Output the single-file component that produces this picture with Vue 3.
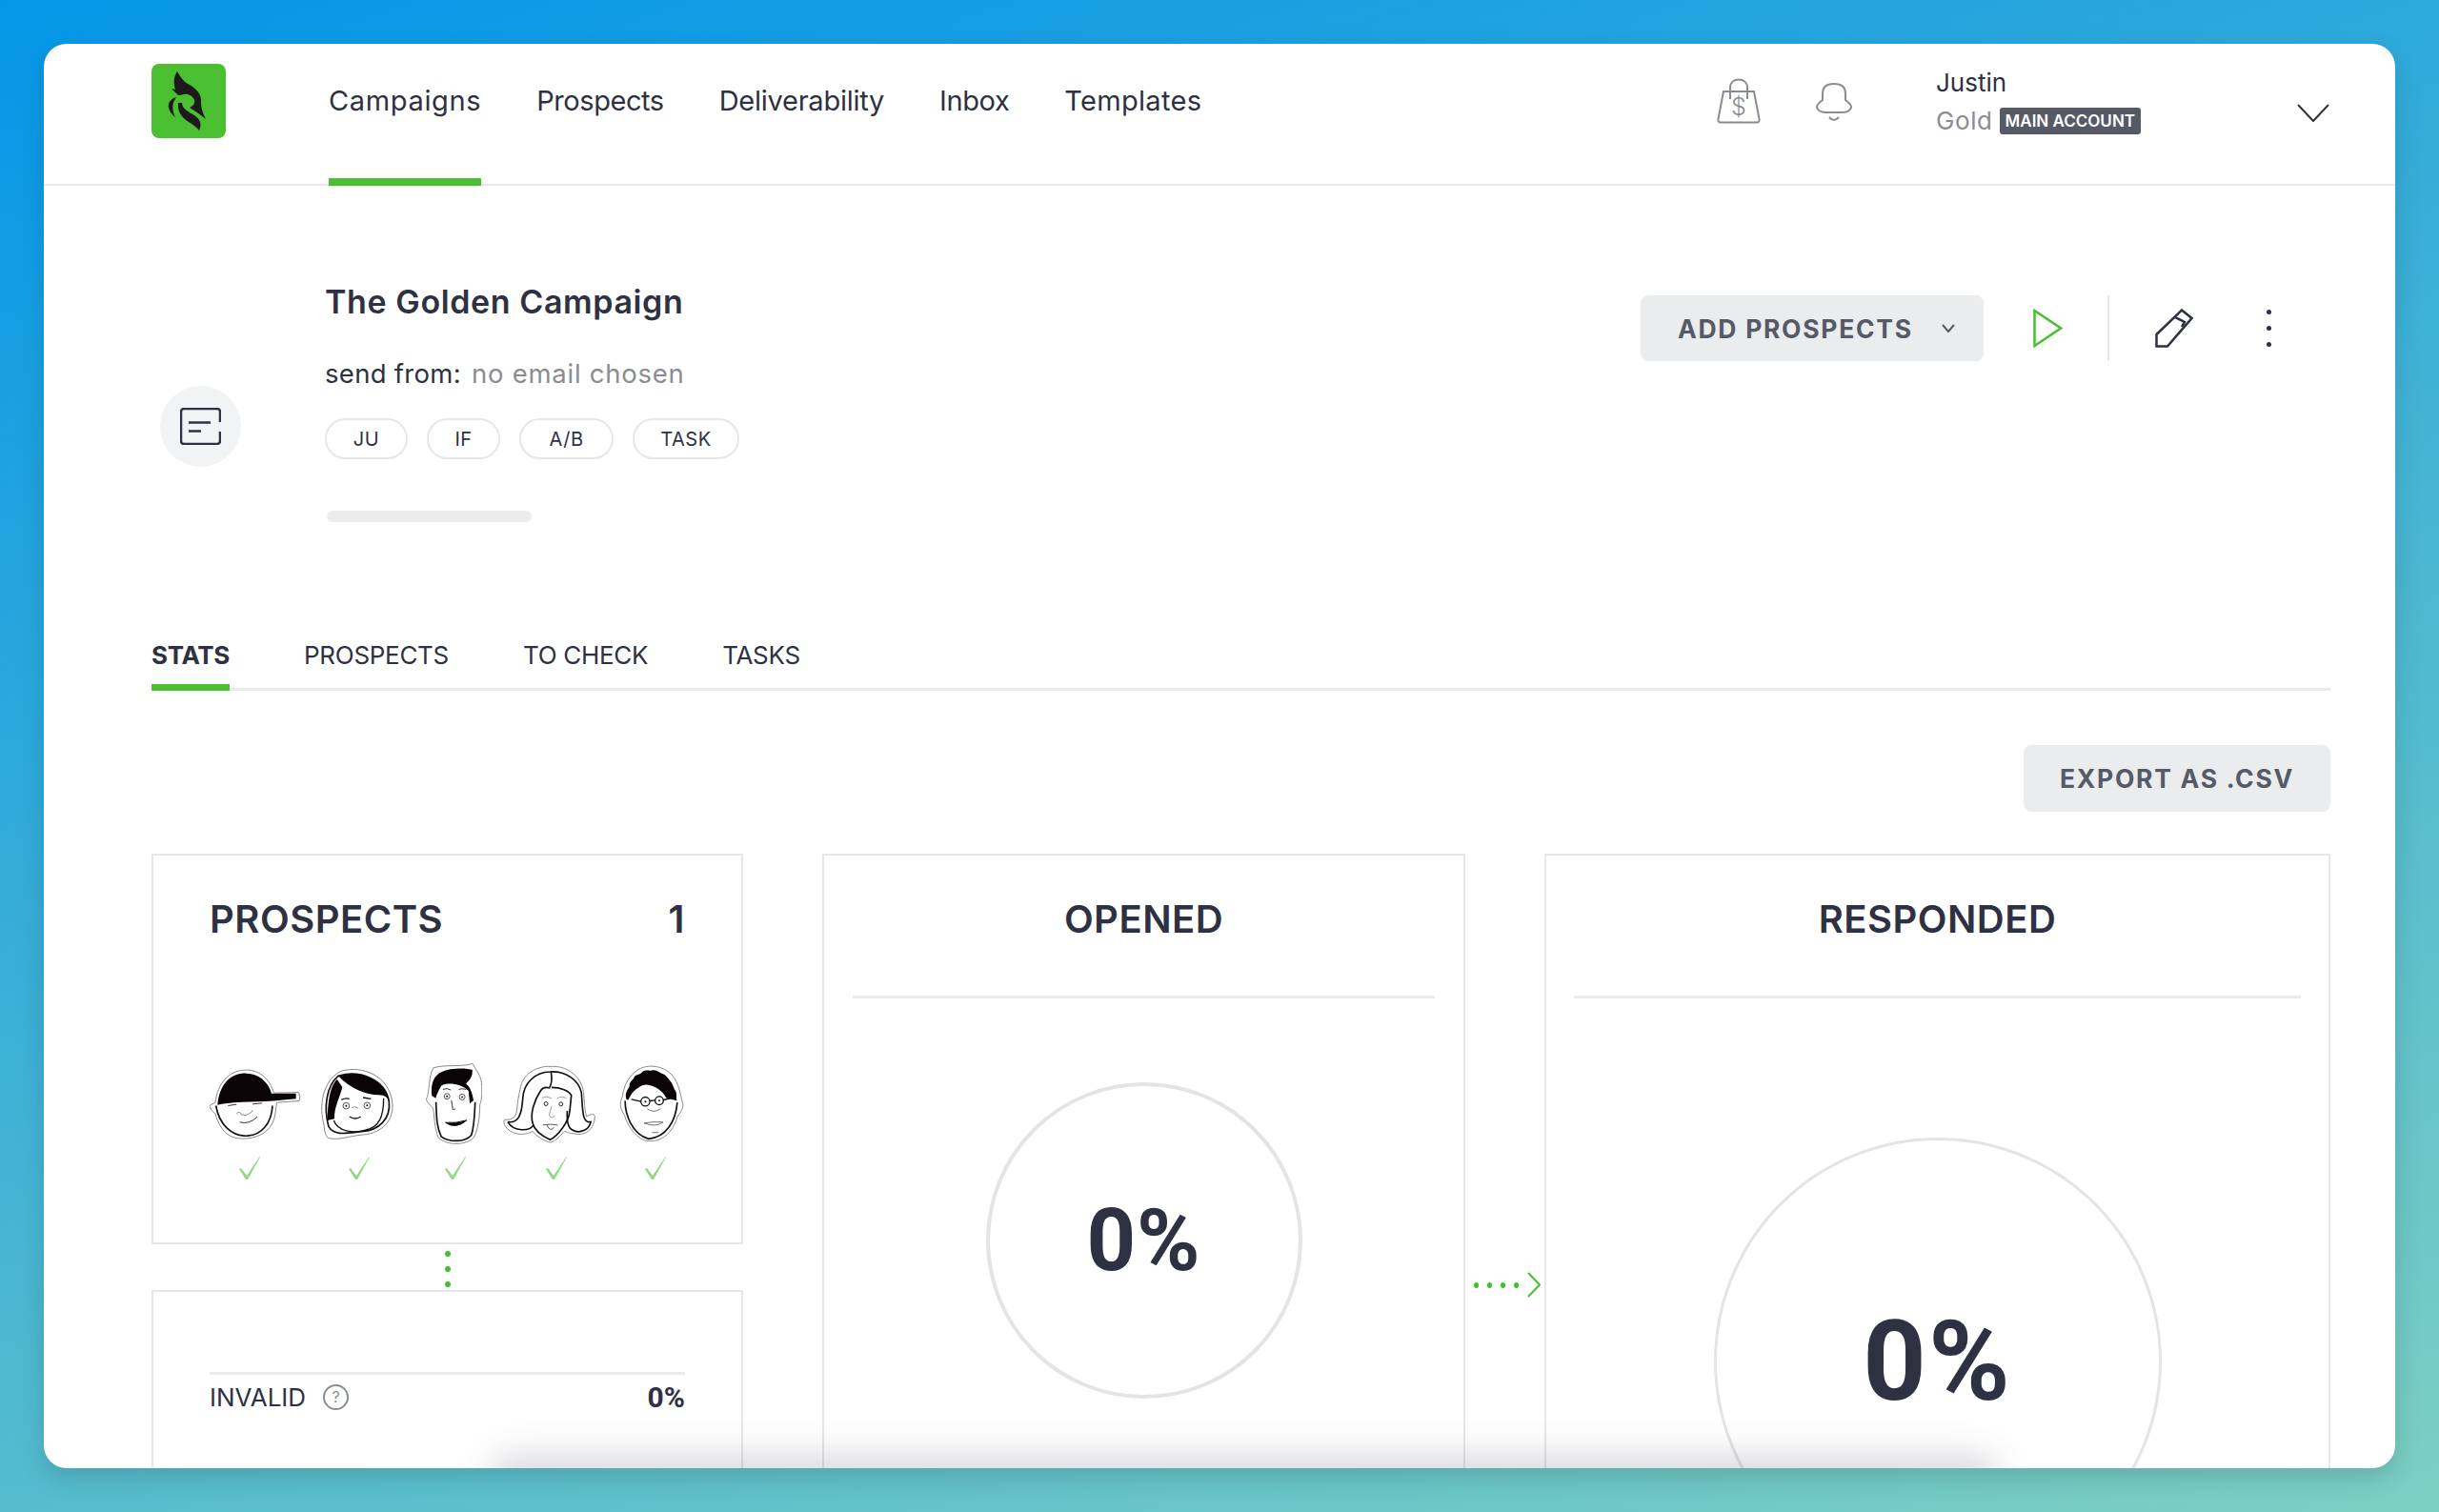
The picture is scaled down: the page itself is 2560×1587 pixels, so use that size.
<script setup>
const navItems = [
  { label: 'Campaigns', spacing: 0.65 },
  { label: 'Prospects', spacing: -0.45 },
  { label: 'Deliverability', spacing: -0.25 },
  { label: 'Inbox', spacing: -0.4 },
  { label: 'Templates', spacing: 0.3 }
]
const pills = [
  { label: 'JU', width: 87 },
  { label: 'IF', width: 77 },
  { label: 'A/B', width: 99 },
  { label: 'TASK', width: 112 }
]
const tabs = ['STATS', 'PROSPECTS', 'TO CHECK', 'TASKS']

// gap = space to the next face, checkOffset = nudge of the tick under it
const faces = [
  { id: 'cap', width: 96, gap: 21, checkOffset: -12 },
  { id: 'bob', width: 76, gap: 34, checkOffset: 4 },
  { id: 'quiff', width: 59, gap: 22, checkOffset: 3 },
  { id: 'long', width: 97, gap: 25, checkOffset: 14 },
  { id: 'glasses', width: 68, gap: 0, checkOffset: 8 }
]
</script>

<template>
  <div class="page">
    <div class="panel">
      <header class="topbar">
        <div class="logo">
          <svg viewBox="0 0 78 78" width="78" height="78">
            <rect width="78" height="78" rx="8" fill="#4abf31" />
            <path fill="#1d1a1c" d="M27 8C30 13 33 18 38 21C46 25 52 31 52 38C52 44 52 48 57 58C51 53 45 49 40 46C44 44 46 41 45 38C43 33 38 31 34 32C31 33 29 33 28 33L21 26L25 27C23 20 23 14 27 8Z" />
            <path fill="#1d1a1c" d="M28 41C27 49 31 56 39 61C44 64 48 67 50 70C52 66 52 62 50 59C47 54 41 52 37 49C34 47 32 44 32 41Z" />
            <path fill="#1d1a1c" d="M26 35C20 37 17 41 18 46C19 50 22 54 25 56C22 50 22 44 23 41C24 38 25 37 26 35Z" />
          </svg>
        </div>
        <nav class="nav">
          <a
            v-for="(item, i) in navItems"
            :key="item.label"
            class="nav-link"
            :class="{ active: i === 0 }"
            :style="{ letterSpacing: item.spacing + 'px' }"
          >{{ item.label }}</a>
        </nav>
        <div class="top-right">
          <svg class="bag" viewBox="0 0 46 48" width="46" height="48" fill="none" stroke="#8a8c93" stroke-width="2">
            <path d="M7 14L1.500 43Q1 46.500 4 46.500H42Q45 46.500 44.500 43L39 14Z" />
            <path d="M14 22V10C14 4.500 18 1.500 23 1.500C28 1.500 32 4.500 32 10V22" />
            <text x="23" y="39" text-anchor="middle" class="bag-sign">$</text>
          </svg>
          <svg class="bell" viewBox="0 0 38 42" width="38" height="42" fill="none" stroke="#8a8c93" stroke-width="2">
            <path d="M7 18V11C7 4 12 1 19 1C26 1 31 4 31 11V18C35 21 37 23 37 25C37 29 32 31 26 31H12C6 31 1 29 1 25C1 23 3 21 7 18Z" />
            <path d="M14 36Q19 42 24 36" />
          </svg>
          <div class="account">
            <div class="account-name">Justin</div>
            <div class="account-plan">
              <span class="plan-name">Gold</span>
              <span class="badge">MAIN ACCOUNT</span>
            </div>
          </div>
          <svg class="account-caret" viewBox="0 0 34 19" width="34" height="19" fill="none" stroke="#2e3142" stroke-width="2">
            <path d="M1 1L17 18L33 1" />
          </svg>
        </div>
      </header>

      <main class="content">
        <section class="hero">
          <div class="hero-icon">
            <svg viewBox="0 0 43 39" width="43" height="39" fill="none" stroke="#2e3142" stroke-width="2.500">
              <path d="M42 15V4A3 3 0 0 0 39 1H4A3 3 0 0 0 1 4V35A3 3 0 0 0 4 38H39A3 3 0 0 0 42 35V25" />
              <path d="M9 15.500H32M9 24.500H22" />
            </svg>
          </div>
          <div class="hero-info">
            <h1 class="hero-title">The Golden Campaign</h1>
            <div class="hero-from">send from: <span class="muted">no email chosen</span></div>
            <div class="pills">
              <span
                v-for="pill in pills"
                :key="pill.label"
                class="pill"
                :style="{ width: pill.width + 'px' }"
              >{{ pill.label }}</span>
            </div>
            <div class="hero-progress"></div>
          </div>
          <div class="hero-actions">
            <button class="btn btn-add">
              <span>ADD PROSPECTS</span>
              <svg viewBox="0 0 14 9" width="14" height="9" fill="none" stroke="#565a66" stroke-width="2">
                <path d="M1 1L7 8L13 1" />
              </svg>
            </button>
            <svg class="play" viewBox="0 0 31 41" width="31" height="41" fill="none" stroke="#4abf31" stroke-width="2.500">
              <path d="M1.500 2V39L29 20.500Z" />
            </svg>
            <div class="action-divider"></div>
            <svg class="pencil" viewBox="0 0 40 41" width="40" height="41" fill="none" stroke="#2e3142" stroke-width="2.500">
              <path d="M1.500 27L28 1.500L38.500 10L13 39.500H1.500Z" />
              <path d="M21 9L31 14L28 19" />
            </svg>
            <div class="kebab"><i></i><i></i><i></i></div>
          </div>
        </section>

        <div class="tabs">
          <a v-for="(tab, i) in tabs" :key="tab" class="tab" :class="{ active: i === 0 }">{{ tab }}</a>
        </div>

        <div class="export-row">
          <button class="btn btn-export">EXPORT AS .CSV</button>
        </div>

        <section class="stats">
          <div class="col-left">
            <div class="card card-prospects">
              <div class="card-head">
                <span class="card-title">PROSPECTS</span>
                <span class="card-title">1</span>
              </div>
              <div class="faces">
                <div
                  v-for="face in faces"
                  :key="face.id"
                  class="face"
                  :style="{ width: face.width + 'px', marginRight: face.gap + 'px' }"
                >
                  <div class="face-art">
                    <svg v-if="face.id === 'cap'" viewBox="60 65 288 224" width="96" height="75" fill="none">
                      <path stroke="#888" stroke-width="3" d="M78 170C85 110 120 70 170 68C215 65 250 95 262 140L340 138Q348 150 342 165L272 170C268 180 270 200 262 225C245 275 185 292 135 280C105 270 85 235 78 205C65 195 58 185 62 178Z" />
                      <path stroke="#111" stroke-width="5" d="M80 180C90 240 130 278 180 275C225 272 255 235 258 180" />
                      <path fill="#0a0406" d="M85 178C90 115 125 78 170 78C215 78 245 105 255 142L332 142L332 158L260 165C200 170 130 165 85 178Z" />
                      <path stroke="#333" stroke-width="3" d="M155 232Q185 240 210 215M118 180L145 176M195 175L225 172" />
                      <path stroke="#777" stroke-width="2.500" d="M145 205Q155 195 160 208Q175 215 185 205Q195 200 195 195" />
                    </svg>
                    <svg v-else-if="face.id === 'bob'" viewBox="408 65 228 228" width="76" height="76" fill="none">
                      <path stroke="#888" stroke-width="3" d="M470 75C540 55 620 90 632 170C640 230 600 270 540 275C500 278 460 295 430 285C418 275 420 255 415 235C400 170 420 100 470 75Z" />
                      <path stroke="#111" stroke-width="5" d="M462 90C530 70 610 100 622 170C628 225 590 262 535 265C490 270 450 280 432 250C415 190 425 120 462 90Z" />
                      <path fill="#0a0406" d="M462 90C500 130 550 150 590 150C610 150 618 160 622 170C610 100 530 70 462 90Z" />
                      <path fill="#0a0406" d="M458 100C440 120 430 150 428 230L450 225C448 190 470 150 475 125Z" />
                      <path stroke="#111" stroke-width="4" d="M498 218Q515 230 533 218M448 230C460 265 510 272 550 260C590 250 605 220 605 160M472 165Q485 158 497 162M540 158L565 162" />
                      <circle cx="487" cy="184" r="10" stroke="#333" stroke-width="2.500" />
                      <circle cx="553" cy="183" r="10" stroke="#333" stroke-width="2.500" />
                      <circle cx="487" cy="184" r="3" fill="#111" />
                      <circle cx="553" cy="183" r="3" fill="#111" />
                      <path stroke="#777" stroke-width="2.500" d="M505 190Q515 182 525 192" />
                    </svg>
                    <svg v-else-if="face.id === 'quiff'" viewBox="741 48 178 258" width="59" height="86" fill="none">
                      <path stroke="#888" stroke-width="3" d="M764 62C800 50 860 60 889 48C900 70 917 90 917 110C920 140 918 165 912 178C912 220 905 260 893 282C875 305 810 312 780 282C768 250 768 215 764 190C750 175 738 165 745 155C752 135 750 90 764 62Z" />
                      <path stroke="#111" stroke-width="5" d="M773 170C775 220 775 250 790 280C815 298 865 298 885 275C895 245 895 210 897 170" />
                      <path fill="#0a0406" d="M760 150C755 110 768 85 790 75C820 60 870 62 888 68C890 90 880 100 868 112C880 120 888 140 892 165L880 175L876 135C850 110 810 108 790 118C780 135 775 148 772 158Z" />
                      <circle cx="808" cy="152" r="9" stroke="#333" stroke-width="2.500" />
                      <circle cx="856" cy="154" r="9" stroke="#333" stroke-width="2.500" />
                      <circle cx="808" cy="152" r="3" fill="#111" />
                      <circle cx="856" cy="154" r="3" fill="#111" />
                      <path stroke="#333" stroke-width="3" d="M795 130Q808 124 820 132M845 130Q855 126 868 130M822 165L826 190Q822 197 835 192" />
                      <path fill="#0a0406" stroke="#111" stroke-width="3" d="M803 235Q835 258 870 228Q835 238 803 235Z" />
                    </svg>
                    <svg v-else-if="face.id === 'long'" viewBox="85 55 295 247" width="97" height="82" fill="none">
                      <path stroke="#888" stroke-width="3" d="M140 130C145 85 190 55 238 58C290 55 335 90 342 140C345 170 345 200 352 218Q372 205 378 215C378 260 345 282 310 272C290 270 285 265 280 265C265 285 245 300 235 300C220 298 190 280 180 265C150 280 110 278 90 245Q85 230 90 228Q130 232 130 190C132 165 135 150 140 130Z" />
                      <path stroke="#111" stroke-width="5" d="M100 235C135 240 145 210 148 160C150 110 190 75 235 75C285 72 325 100 335 140C340 190 335 240 365 235C360 260 330 275 305 260C295 255 288 235 290 200" />
                      <path stroke="#111" stroke-width="5" d="M238 75C242 95 240 115 232 128M240 125C270 125 295 135 303 150L298 200C295 235 260 280 235 292C210 280 185 260 180 240C170 210 185 165 205 135C215 120 232 125 232 128M100 235C120 268 170 265 182 245" />
                      <circle cx="222" cy="177" r="6" stroke="#222" stroke-width="3" />
                      <circle cx="270" cy="178" r="6" stroke="#222" stroke-width="3" />
                      <path stroke="#888" stroke-width="2.500" d="M210 158Q225 150 240 160M258 160Q272 150 288 160M240 185L232 215Q242 225 250 215" />
                      <path stroke="#333" stroke-width="2.500" d="M212 245Q235 240 260 245M225 245Q235 268 248 252" />
                    </svg>
                    <svg v-else viewBox="452 52 204 247" width="68" height="82" fill="none">
                      <path stroke="#888" stroke-width="3" d="M500 75C530 45 590 50 620 85C640 110 645 145 650 165C660 190 640 205 635 215C620 270 580 295 545 292C510 290 480 250 468 210C455 190 450 175 462 150C465 120 480 90 500 75Z" />
                      <path fill="#0a0406" d="M474 160C468 140 478 130 484 118C482 106 494 100 498 92C502 80 518 84 524 74C536 64 548 72 558 68C570 66 578 76 590 80C600 84 606 94 614 104C622 112 622 124 628 132C636 142 630 154 634 164L600 156C590 134 566 118 540 114C524 112 512 124 500 132C490 140 486 152 480 162Z" />
                      <path stroke="#111" stroke-width="5" d="M470 165C470 205 490 270 545 285C600 280 630 230 635 170" />
                      <circle cx="534" cy="167" r="14" stroke="#111" stroke-width="4" />
                      <circle cx="578" cy="164" r="13" stroke="#111" stroke-width="4" />
                      <circle cx="534" cy="167" r="3" fill="#111" />
                      <circle cx="578" cy="164" r="3" fill="#111" />
                      <path stroke="#111" stroke-width="4" d="M520 167L490 160M590 162L625 155M548 165L565 163" />
                      <path stroke="#555" stroke-width="2.500" d="M540 190Q560 205 582 190M530 235Q560 230 590 232Q565 250 530 235M555 265L575 265" />
                    </svg>
                  </div>
                  <svg class="check" :style="{ marginLeft: face.checkOffset + 'px' }" viewBox="0 0 22 24" width="22" height="24">
                    <path fill="#93d884" d="M0 13L2 12L8 20L21.500 0L22 .5L9 24H7Z" />
                  </svg>
                </div>
              </div>
            </div>
            <div class="connector"><i></i><i></i><i></i></div>
            <div class="card card-invalid">
              <div class="invalid-row">
                <span class="invalid-label">INVALID</span>
                <span class="help">?</span>
                <span class="invalid-value">0%</span>
              </div>
            </div>
          </div>

          <div class="card card-opened">
            <div class="card-title centered">OPENED</div>
            <div class="card-rule"></div>
            <div class="ring ring-opened">0%</div>
          </div>

          <div class="arrow">
            <i></i><i></i><i></i><i></i>
            <svg viewBox="0 0 14 27" width="14" height="27" fill="none" stroke="#4abf31" stroke-width="2">
              <path d="M1 1L13 13.500L1 26" />
            </svg>
          </div>

          <div class="card card-responded">
            <div class="card-title centered">RESPONDED</div>
            <div class="card-rule"></div>
            <div class="ring ring-responded">0%</div>
          </div>
        </section>
      </main>

      <div class="bottom-fade"></div>
    </div>
  </div>
</template>

<style>
html,
body {
  margin: 0;
  background: #3fb0d6;
}
</style>

<style scoped>
.page {
  width: 2560px;
  height: 1587px;
  box-sizing: border-box;
  padding: 46px;
  overflow: hidden;
  background: linear-gradient(163deg, #0596e8, #7dcfc2);
  font-family: Inter, "Open Sans", sans-serif;
  color: #2e3142;
}

.panel {
  position: relative;
  height: 1495px;
  overflow: hidden;
  border-radius: 24px;
  background: #fff;
  box-shadow: 0 10px 26px rgba(30, 60, 60, 0.2);
}

.topbar {
  display: flex;
  height: 147px;
  padding: 0 69px 0 113px;
  border-bottom: 2px solid #e9eaec;
}

.logo {
  margin-top: 21px;
  line-height: 0;
}

.nav {
  display: flex;
  gap: 58px;
  margin-left: 108px;
}

.nav-link {
  height: 141px;
  margin-bottom: -2px;
  border-bottom: 8px solid transparent;
  font-size: 29px;
  line-height: 120px;
}

.nav-link.active {
  border-bottom-color: #4abf31;
}

.top-right {
  display: flex;
  margin-left: auto;
}

.bag {
  margin-top: 36px;
}

.bag-sign {
  fill: #8a8c93;
  stroke: none;
  font-size: 25px;
  font-weight: 300;
}

.bell {
  margin: 41px 0 0 58px;
}

.account {
  width: 379px;
  margin-left: 88px;
  padding-top: 19px;
  font-size: 26px;
}

.account-name {
  line-height: 44px;
}

.account-plan {
  display: flex;
  align-items: center;
  gap: 7px;
  margin-top: -4px;
  color: #8a8c93;
  line-height: 44px;
}

.plan-name {
  letter-spacing: 0.6px;
}

.badge {
  height: 28px;
  padding: 0 6px;
  border-radius: 3px;
  background: #565a66;
  color: #fff;
  font-size: 17px;
  font-weight: 600;
  line-height: 28px;
  white-space: nowrap;
}

.account-caret {
  margin-top: 63px;
}

.content {
  padding: 98px 68px 0 113px;
}

.hero {
  display: flex;
}

.hero-icon {
  display: flex;
  align-items: center;
  justify-content: center;
  width: 85px;
  height: 85px;
  margin: 112px 88px 0 9px;
  border-radius: 50%;
  background: #f2f3f4;
}

.hero-title {
  margin: 0;
  font-size: 34px;
  font-weight: 600;
  letter-spacing: 0.6px;
  line-height: 48px;
}

.hero-from {
  margin-top: 31px;
  font-size: 27.500px;
  letter-spacing: 0.3px;
  line-height: 40px;
}

.muted {
  margin-left: 3px;
  color: #8a8c93;
  letter-spacing: 0.75px;
}

.pills {
  display: flex;
  gap: 20px;
  margin-top: 27px;
}

.pill {
  display: flex;
  align-items: center;
  justify-content: center;
  box-sizing: border-box;
  height: 43px;
  border: 2px solid #e6e7e9;
  border-radius: 22px;
  font-size: 20px;
  letter-spacing: 0.5px;
}

.hero-progress {
  width: 215px;
  height: 12px;
  margin: 54px 0 0 2px;
  border-radius: 6px;
  background: #ebecee;
}

.hero-actions {
  display: flex;
  align-items: center;
  height: 69px;
  margin: 17px 62px 0 auto;
}

.btn {
  border: 0;
  border-radius: 8px;
  background: #ebecee;
  color: #565a66;
  font-family: inherit;
  font-size: 26.500px;
  font-weight: 700;
  letter-spacing: 1.700px;
}

.btn-add {
  display: flex;
  align-items: center;
  justify-content: space-between;
  width: 360px;
  height: 69px;
  padding: 0 30px 0 39px;
}

.play {
  margin-left: 52px;
}

.action-divider {
  width: 2px;
  height: 69px;
  margin-left: 47px;
  background: #e6e7e9;
}

.pencil {
  margin-left: 48px;
}

.kebab {
  display: flex;
  flex-direction: column;
  gap: 12px;
  margin-left: 77px;
}

.kebab i {
  width: 5px;
  height: 5px;
  border-radius: 50%;
  background: #2e3142;
}

.tabs {
  display: flex;
  gap: 78px;
  margin-top: 121px;
  border-bottom: 3px solid #e9eaec;
}

.tab {
  height: 36px;
  margin-bottom: -3px;
  padding-bottom: 13px;
  border-bottom: 7px solid transparent;
  font-size: 26px;
  letter-spacing: -0.3px;
  line-height: 38px;
}

.tab.active {
  border-bottom-color: #4abf31;
  font-weight: 700;
}

.export-row {
  display: flex;
  justify-content: flex-end;
  margin-top: 57px;
}

.btn-export {
  width: 322px;
  height: 70px;
}

.stats {
  display: flex;
  margin-top: 44px;
}

.col-left {
  width: 621px;
  margin-right: 83px;
}

.card {
  box-sizing: border-box;
  border: 2px solid #e6e7e9;
}

.card-prospects {
  height: 410px;
  padding: 43px 59px 0;
}

.card-head {
  display: flex;
  justify-content: space-between;
}

.card-title {
  font-size: 40px;
  font-weight: 600;
  letter-spacing: 0.5px;
  line-height: 48px;
}

.centered {
  text-align: center;
}

.faces {
  display: flex;
  margin-top: 127px;
}

.face {
  display: flex;
  flex-direction: column;
  align-items: center;
  flex: none;
}

.face-art {
  display: flex;
  align-items: center;
  height: 86px;
}

.check {
  margin-top: 12px;
}

.connector {
  display: flex;
  flex-direction: column;
  align-items: center;
  gap: 10px;
  box-sizing: border-box;
  height: 48px;
  padding-top: 7px;
}

.connector i {
  width: 6px;
  height: 6px;
  border-radius: 50%;
  background: #3fc02c;
}

.card-invalid {
  height: 400px;
  padding: 84px 59px 0;
}

.invalid-row {
  display: flex;
  align-items: center;
  height: 38px;
  padding-top: 4px;
  border-top: 3px solid #e9eaec;
}

.invalid-label {
  font-size: 26px;
}

.help {
  display: flex;
  align-items: center;
  justify-content: center;
  box-sizing: border-box;
  width: 27px;
  height: 27px;
  margin-left: 18px;
  border: 2px solid #8a8c93;
  border-radius: 50%;
  color: #8a8c93;
  font-size: 16px;
}

.invalid-value {
  margin-left: auto;
  font-family: Roboto, sans-serif;
  font-size: 30px;
  font-weight: 700;
}

.card-opened {
  width: 675px;
  height: 1000px;
  padding: 43px 30px 0;
}

.card-responded {
  flex: 1;
  height: 1000px;
  padding: 43px 29px 0;
}

.card-rule {
  height: 3px;
  margin-top: 56px;
  background: #e9eaec;
}

.ring {
  display: flex;
  align-items: center;
  justify-content: center;
  box-sizing: border-box;
  margin: 88px auto 0;
  border-radius: 50%;
  font-family: Roboto, sans-serif;
  font-weight: 700;
}

.ring-opened {
  width: 332px;
  height: 332px;
  border: 4px solid #e3e4e6;
  font-size: 90px;
  letter-spacing: 1px;
}

.ring-responded {
  width: 470px;
  height: 470px;
  margin-top: 146px;
  border: 3px solid #e3e4e6;
  font-size: 116px;
  letter-spacing: 2px;
}

.arrow {
  display: flex;
  align-items: center;
  gap: 9px;
  box-sizing: border-box;
  width: 83px;
  height: 905px;
  padding-left: 9px;
}

.arrow i {
  width: 5px;
  height: 6px;
  border-radius: 50%;
  background: #3fc02c;
}

.bottom-fade {
  position: absolute;
  left: 480px;
  bottom: -34px;
  width: 1560px;
  height: 34px;
  border-radius: 40px;
  box-shadow: 0 0 36px 14px rgba(70, 70, 90, 0.2);
  pointer-events: none;
}
</style>
